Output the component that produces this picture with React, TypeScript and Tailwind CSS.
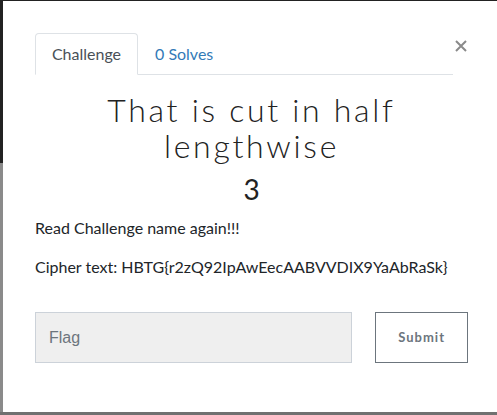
import React from "react";

const ChallengeModal: React.FC = () => {
    return (
        <div className="flex h-[411px] flex-col bg-white pl-8 pr-[29px] pt-8" style={{ fontFamily: "Lato, sans-serif" }}>
            {/* Tabs */}
            <div className="flex items-start">
                <div className="flex flex-1 border-b border-[#dee2e6]">
                    <div className="-mb-px flex h-[42px] w-[103px] items-center justify-center rounded-t border border-[#dee2e6] border-b-white bg-white text-[16px] text-[#495057]">
                        Challenge
                    </div>
                    <div className="flex h-[41px] items-center px-[17px] text-[16px] text-[#337ab7]">
                        0 Solves
                    </div>
                </div>
                <button className="ml-px mt-[6px] shrink-0">
                    <svg width="14" height="14" viewBox="0 0 14 14">
                        <path d="M2 2L12 12M12 2L2 12" stroke="#8a8a8a" strokeWidth="2" />
                    </svg>
                </button>
            </div>

            {/* Title */}
            <h1 className="mt-[17px] text-center text-[32px] font-light leading-[36px] tracking-[2.7px] text-[#222]">
                That is cut in half
                <br />
                lengthwise
            </h1>
            <h2 className="mt-[10px] text-center text-[28px] font-normal leading-[30px] text-[#222]">3</h2>

            {/* Description */}
            <div className="mt-[12px] text-[16px] text-[#212529]">
                <p className="leading-[24px]">Read Challenge name again!!!</p>
                <p className="mt-[15px] leading-[24px]">Cipher text: HBTG{"{"}r2zQ92IpAwEecAABVVDIX9YaAbRaSk{"}"}</p>
            </div>

            {/* Flag form */}
            <div className="mt-[33px] flex gap-[23px]">
                <input
                    className="h-[51px] w-[318px] border border-[#ccd2d9] bg-[#efefef] px-[13px] text-[16px] placeholder-[#6c757d] outline-none"
                    style={{ fontFamily: "'Liberation Sans', Arial, sans-serif" }}
                    placeholder="Flag"
                />
                <button className="h-[51px] w-[93px] border border-[#6c757d] bg-white text-[13px] font-bold tracking-[1px] text-[#6c757d]">
                    Submit
                </button>
            </div>
        </div>
    );
};

export default function App() {
    return (
        <div className="flex h-[415px] w-[497px] flex-col overflow-hidden bg-[#707070]">
            <div className="flex">
                <div className="flex w-[3px] shrink-0 flex-col">
                    <div className="h-[163px] bg-[#222]" />
                    <div className="h-[249px] bg-[#8a8a8a]" />
                </div>
                <div className="flex min-w-0 flex-1 flex-col">
                    <div className="h-px bg-[#222]" />
                    <ChallengeModal />
                </div>
            </div>
        </div>
    );
}
